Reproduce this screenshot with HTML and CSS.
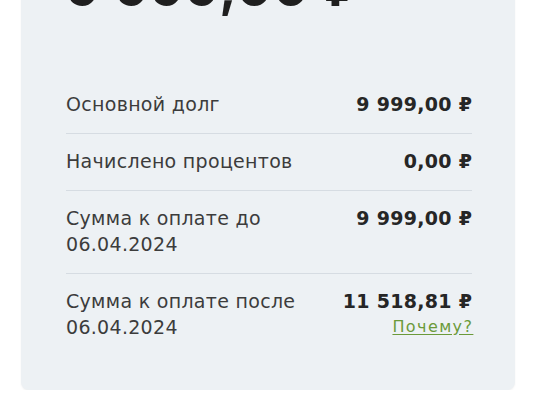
FILE: index.html
```html
<!DOCTYPE html>
<html lang="ru">
<head>
<meta charset="utf-8">
<link rel="stylesheet" href="styles.css">
</head>
<body>
<div class="card">
  <div class="amount">9 999,00 ₽</div>
  <div class="rows">
    <div class="row">
      <div class="label">Основной долг</div>
      <div class="value">9 999,00 ₽</div>
    </div>
    <div class="row">
      <div class="label">Начислено процентов</div>
      <div class="value">0,00 ₽</div>
    </div>
    <div class="row">
      <div class="label">Сумма к оплате до<br>06.04.2024</div>
      <div class="value">9 999,00 ₽</div>
    </div>
    <div class="row">
      <div class="label">Сумма к оплате после<br>06.04.2024</div>
      <div class="value">11 518,81 ₽<a class="why" href="#">Почему?</a></div>
    </div>
  </div>
</div>
</body>
</html>
```
FILE: styles.css
```css
html, body {
  margin: 0;
  padding: 0;
  background: #ffffff;
}
body {
  font-family: "DejaVu Sans", "Liberation Sans", sans-serif;
  color: #333;
}
.card {
  margin: -40px 0 0 21px;
  width: 494px;
  box-sizing: border-box;
  padding: 0 43px 34px 45px;
  background: #edf1f4;
  border-radius: 8px;
  box-shadow: 0 1px 2px rgba(0,0,0,0.06);
}
.amount {
  font-family: Inter, "Liberation Sans", sans-serif;
  font-size: 52px;
  line-height: 56px;
  font-weight: 700;
  color: #1f1f1f;
  letter-spacing: 1.5px;
}
.rows {
  margin-top: 61px;
}
.row {
  display: flex;
  justify-content: space-between;
  align-items: flex-start;
  padding: 14px 0 16px;
  border-bottom: 1px solid #d6dce2;
  font-size: 19px;
  line-height: 26px;
  letter-spacing: 0.3px;
}
.row:last-child {
  border-bottom: none;
}
.label {
  color: #3c3c3c;
}
.value {
  font-weight: 700;
  color: #262626;
  text-align: right;
  display: flex;
  flex-direction: column;
  align-items: flex-end;
  margin-right: -0.3px;
}
.why {
  font-weight: 400;
  font-size: 16px;
  letter-spacing: 1.4px;
  margin-right: -1.1px;
  color: #6b9a3a;
  text-decoration: underline;
  text-underline-offset: 2px;
}
```
